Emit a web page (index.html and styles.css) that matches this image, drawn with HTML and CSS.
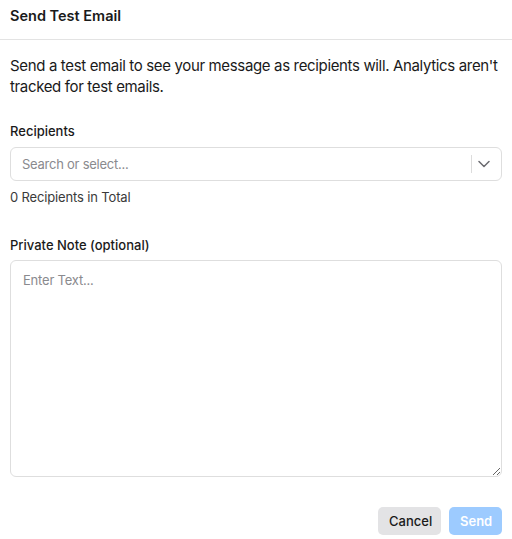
FILE: index.html
```html
<!DOCTYPE html>
<html>
<head>
<meta charset="utf-8">
<link rel="stylesheet" href="styles.css">
</head>
<body>
<div class="modal">
  <div class="header">Send Test Email</div>
  <div class="body">
    <p class="intro">Send a test email to see your message as recipients will. Analytics aren't tracked for test emails.</p>
    <div class="field">
      <div class="label">Recipients</div>
      <div class="select">
        <span class="placeholder">Search or select...</span>
        <span class="sep"></span>
        <svg class="chev" width="12" height="8" viewBox="0 0 12 8"><path d="M1 1.5 L6 6.5 L11 1.5" fill="none" stroke="#6b6b70" stroke-width="1.5" stroke-linecap="round" stroke-linejoin="round"/></svg>
      </div>
      <div class="count">0 Recipients in Total</div>
    </div>
    <div class="field note">
      <div class="label">Private Note (optional)</div>
      <textarea class="textarea" placeholder="Enter Text..."></textarea>
    </div>
    <div class="actions">
      <button class="btn cancel">Cancel</button>
      <button class="btn send">Send</button>
    </div>
  </div>
</div>
</body>
</html>
```
FILE: styles.css
```css
* { box-sizing: border-box; }
html, body { margin: 0; padding: 0; background: #fff; }
body { font-family: Inter, "Noto Sans", sans-serif; color: #1a1a1a; }
.modal { width: 512px; height: 539px; }
.header {
  height: 40px;
  padding: 6px 10px 0;
  font-size: 14.5px;
  font-weight: 600;
  line-height: 20px;
  border-bottom: 1px solid #e3e3e3;
}
.body { padding: 0 10px; }
.intro {
  margin: 15px 0 0;
  font-size: 15px;
  line-height: 21px;
  letter-spacing: -0.35px;
  color: #1a1a1a;
}
.field { margin-top: 26px; }
.label {
  font-size: 13px;
  font-weight: 500;
  line-height: 16px;
  color: #1a1a1a;
}
.select {
  margin-top: 8px;
  height: 34px;
  border: 1px solid #dedede;
  border-radius: 6px;
  display: flex;
  align-items: center;
  padding: 0 0 0 11px;
}
.placeholder { flex: 1; font-size: 13px; letter-spacing: -0.25px; color: #8a8a8e; }
.sep { width: 1px; height: 18px; background: #dcdcdc; margin-right: 6px; }
.chev { margin-right: 11px; }
.count {
  margin-top: 8px;
  font-size: 13px;
  line-height: 16px;
  letter-spacing: -0.15px;
  color: #3a3a3a;
}
.note { margin-top: 32px; }
.textarea {
  display: block;
  margin-top: 7px;
  width: 100%;
  height: 217px;
  border: 1px solid #dedede;
  border-radius: 6px;
  padding: 11px 12px;
  font-family: Inter, "Noto Sans", sans-serif;
  font-size: 13px;
  letter-spacing: -0.2px;
  color: #1a1a1a;
  resize: vertical;
  outline: none;
}
.textarea::placeholder { color: #8a8a8e; }
.actions {
  display: flex;
  justify-content: flex-end;
  gap: 8px;
  margin-top: 30px;
}
.btn {
  height: 28px;
  border: none;
  border-radius: 5px;
  font-family: Inter, "Noto Sans", sans-serif;
  font-size: 13px;
  font-weight: 500;
  padding: 0 11px;
}
.cancel { background: #e3e3e5; color: #1a1a1a; width: 63px; }
.send { background: #9dcbff; color: #fff; width: 53px; font-weight: 600; }
```
